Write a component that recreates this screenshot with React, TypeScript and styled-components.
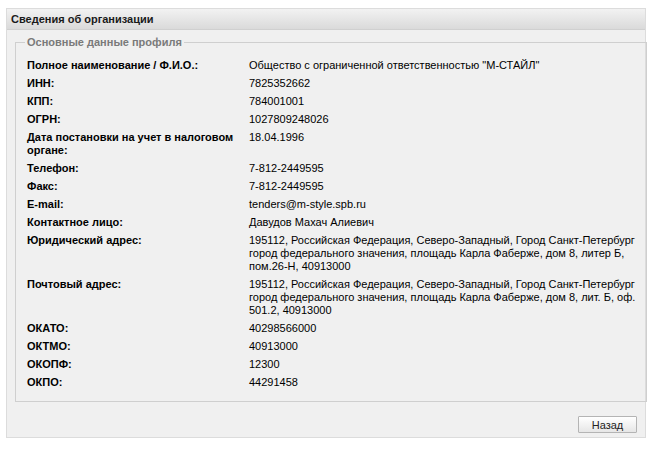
import { Fragment } from "react";
import styled, { createGlobalStyle } from "styled-components";

const GlobalStyle = createGlobalStyle`
  html, body {
    margin: 0;
    padding: 0;
    background: #ffffff;
  }
  body {
    font-family: "Liberation Sans", Arial, sans-serif;
    font-size: 11px;
    color: #000;
  }
`;

const Page = styled.div`
  padding: 8px 4px 0 6px;
`;

const Panel = styled.section`
  width: 640px;
  height: 430px;
  box-sizing: border-box;
  background: #f0f0f0;
  border: 1px solid #dcdcdc;
  display: flex;
  flex-direction: column;
`;

const PanelHeader = styled.header`
  height: 20px;
  display: flex;
  align-items: center;
  padding-left: 4px;
  background: linear-gradient(#f2f2f2, #dadada);
  border-bottom: 1px solid #d0d0d0;
  font-weight: bold;
  color: #1a1a1a;
`;

const Body = styled.div`
  flex: 1;
  display: flex;
  flex-direction: column;
  padding: 6px 8px 0 8px;
`;

const Fieldset = styled.fieldset`
  margin: 0;
  height: 366px;
  box-sizing: border-box;
  border: 1px solid #cfcfcf;
  padding: 11px 11px 0 11px;
`;

const Legend = styled.legend`
  padding: 0 2px;
  margin-left: -2px;
  font-weight: bold;
  color: #7a7a7a;
`;

const Grid = styled.dl`
  margin: 0;
  display: grid;
  grid-template-columns: 222px 1fr;
  row-gap: 5px;
  line-height: 13px;
`;

const Label = styled.dt`
  font-weight: bold;
  padding-right: 6px;
`;

const Value = styled.dd`
  margin: 0;
  white-space: nowrap;
`;

const Line = styled.span`
  display: block;
`;

const Footer = styled.div`
  display: flex;
  justify-content: flex-end;
  padding: 14px 0 0;
`;

const Button = styled.button`
  width: 59px;
  height: 17px;
  padding: 0;
  font-family: "Liberation Sans", Arial, sans-serif;
  font-size: 11px;
  color: #222;
  background: linear-gradient(#ffffff, #e6e6e6);
  border: 1px solid #b4b4b4;
  border-radius: 1px;
`;

type Row = { label: string; value: string[] };

const rows: Row[] = [
  { label: "Полное наименование / Ф.И.О.:", value: ["Общество с ограниченной ответственностью \"М-СТАЙЛ\""] },
  { label: "ИНН:", value: ["7825352662"] },
  { label: "КПП:", value: ["784001001"] },
  { label: "ОГРН:", value: ["1027809248026"] },
  { label: "Дата постановки на учет в налоговом органе:", value: ["18.04.1996"] },
  { label: "Телефон:", value: ["7-812-2449595"] },
  { label: "Факс:", value: ["7-812-2449595"] },
  { label: "E-mail:", value: ["tenders@m-style.spb.ru"] },
  { label: "Контактное лицо:", value: ["Давудов Махач Алиевич"] },
  {
    label: "Юридический адрес:",
    value: [
      "195112, Российская Федерация, Северо-Западный, Город Санкт-Петербург",
      "город федерального значения, площадь Карла Фаберже, дом 8, литер Б,",
      "пом.26-Н, 40913000",
    ],
  },
  {
    label: "Почтовый адрес:",
    value: [
      "195112, Российская Федерация, Северо-Западный, Город Санкт-Петербург",
      "город федерального значения, площадь Карла Фаберже, дом 8, лит. Б, оф.",
      "501.2, 40913000",
    ],
  },
  { label: "ОКАТО:", value: ["40298566000"] },
  { label: "ОКТМО:", value: ["40913000"] },
  { label: "ОКОПФ:", value: ["12300"] },
  { label: "ОКПО:", value: ["44291458"] },
];

function App() {
  return (
    <>
      <GlobalStyle />
      <Page>
        <Panel>
          <PanelHeader>Сведения об организации</PanelHeader>
          <Body>
            <Fieldset>
              <Legend>Основные данные профиля</Legend>
              <Grid>
                {rows.map((row) => (
                  <Fragment key={row.label}>
                    <Label>{row.label}</Label>
                    <Value>
                      {row.value.map((line) => (
                        <Line key={line}>{line}</Line>
                      ))}
                    </Value>
                  </Fragment>
                ))}
              </Grid>
            </Fieldset>
            <Footer>
              <Button>Назад</Button>
            </Footer>
          </Body>
        </Panel>
      </Page>
    </>
  );
}

export default App;
